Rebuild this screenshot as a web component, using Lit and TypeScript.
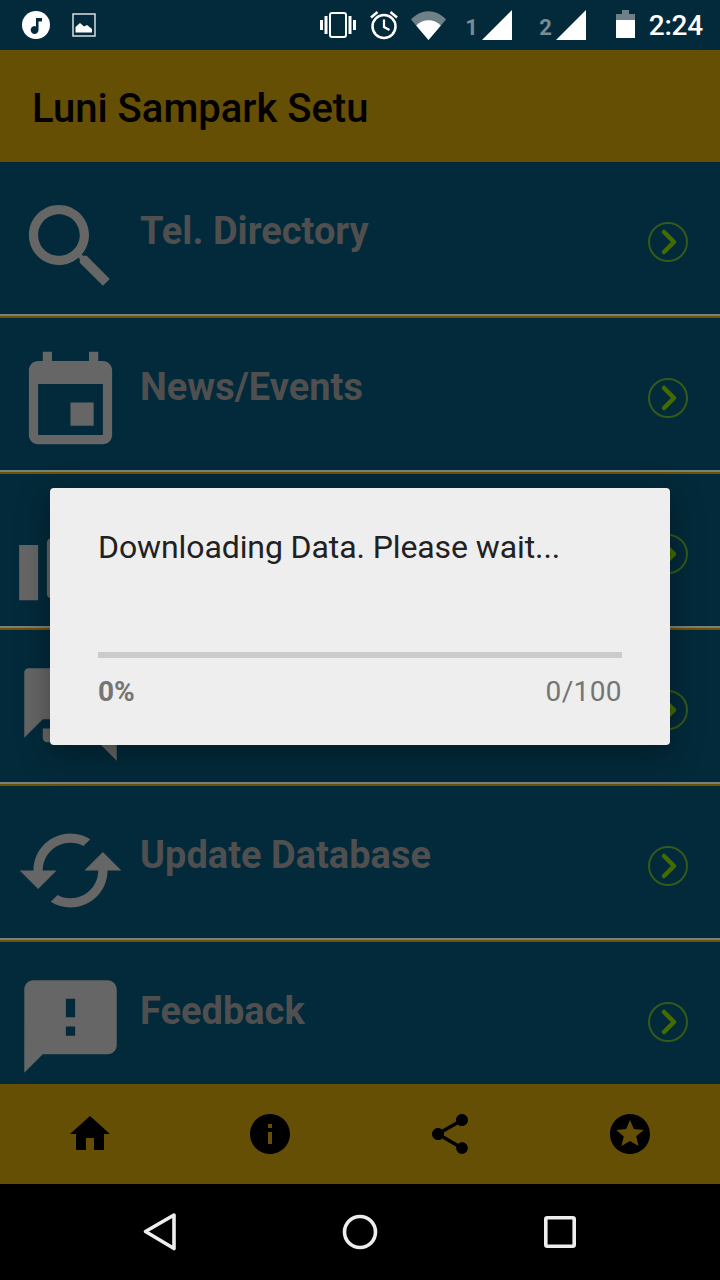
import { LitElement, html, css } from "lit";
import { customElement } from "lit/decorators.js";

const ICONS = {
  search: "M15.5 14h-.79l-.28-.27C15.41 12.59 16 11.11 16 9.5 16 5.91 13.09 3 9.5 3S3 5.91 3 9.5 5.91 16 9.5 16c1.61 0 3.09-.59 4.23-1.57l.27.28v.79l5 4.99L20.49 19l-4.99-5zm-6 0C7.01 14 5 11.99 5 9.5S7.01 5 9.5 5 14 7.01 14 9.5 11.99 14 9.5 14z",
  event: "M17 12h-5v5h5v-5zM16 1v2H8V1H6v2H5c-1.11 0-1.99.9-1.99 2L3 19c0 1.1.89 2 2 2h14c1.1 0 2-.9 2-2V5c0-1.1-.9-2-2-2h-1V1h-2zm3 18H5V8h14v11z",
  pages: "M.9 9.100H5V21H.9z M6.900 8.600c0-.6.4-1 1-1H22v13H7.900c-.6 0-1-.4-1-1z",
  forum: "M21 6h-2v9H6v2c0 .55.45 1 1 1h11l4 4V7c0-.55-.45-1-1-1zm-4 6V3c0-.55-.45-1-1-1H3c-.55 0-1 .45-1 1v14l4-4h10c.55 0 1-.45 1-1z",
  cached: "M19 8l-4 4h3c0 3.31-2.69 6-6 6-1.01 0-1.97-.25-2.8-.7l-1.46 1.46C8.97 19.54 10.43 20 12 20c4.42 0 8-3.58 8-8h3l-4-4zM6 12c0-3.31 2.69-6 6-6 1.01 0 1.97.25 2.8.7l1.46-1.46C15.03 4.46 13.57 4 12 4c-4.42 0-8 3.58-8 8H1l4 4 4-4H6z",
  sms: "M20 2H4c-1.1 0-1.99.9-1.99 2L2 22l4-4h14c1.1 0 2-.9 2-2V4c0-1.1-.9-2-2-2zm-7 12h-2v-2h2v2zm0-4h-2V6h2v4z",
  home: "M10 20v-6h4v6h5v-8h3L12 3 2 12h3v8z",
  info: "M12 2C6.48 2 2 6.48 2 12s4.48 10 10 10 10-4.48 10-10S17.52 2 12 2zm1 15h-2v-6h2v6zm0-8h-2V7h2v2z",
  share: "M18 16.08c-.76 0-1.44.3-1.96.77L8.91 12.7c.05-.23.09-.46.09-.7s-.04-.47-.09-.7l7.05-4.11c.54.5 1.25.81 2.04.81 1.66 0 3-1.34 3-3s-1.34-3-3-3-3 1.34-3 3c0 .24.04.47.09.7L8.04 9.81C7.5 9.31 6.79 9 6 9c-1.66 0-3 1.34-3 3s1.34 3 3 3c.79 0 1.5-.31 2.04-.81l7.12 4.16c-.05.21-.08.43-.08.65 0 1.61 1.31 2.92 2.92 2.92 1.61 0 2.92-1.31 2.92-2.92s-1.31-2.92-2.92-2.92z",
  stars: "M11.99 2C6.47 2 2 6.48 2 12s4.47 10 9.99 10C17.52 22 22 17.52 22 12S17.52 2 11.99 2zm4.24 16L12 15.45 7.77 18l1.12-4.81-3.73-3.23 4.92-.42L12 5l1.92 4.53 4.92.42-3.73 3.23L16.23 18z",
};

const ROWS: { icon: keyof typeof ICONS; label: string }[] = [
  { icon: "search", label: "Tel. Directory" },
  { icon: "event", label: "News/Events" },
  { icon: "pages", label: "" },
  { icon: "forum", label: "" },
  { icon: "cached", label: "Update Database" },
  { icon: "sms", label: "Feedback" },
];

@customElement("app-root")
export class AppRoot extends LitElement {
  static styles = css`
    :host {
      display: block;
      position: relative;
      width: 720px;
      height: 1280px;
      overflow: hidden;
      background: #032a3a;
      font-family: Roboto, "Liberation Sans", sans-serif;
    }
    .page { display: flex; flex-direction: column; height: 1280px; }
    .status {
      height: 50px;
      flex: none;
      display: flex;
      align-items: center;
      justify-content: space-between;
      color: #fff;
    }
    .status svg { display: block; flex: none; }
    .left { display: flex; align-items: center; margin-left: 22px; gap: 22px; }
    .right { display: flex; align-items: center; margin-right: 17px; }
    .sim { font-size: 22px; font-weight: 700; color: #7b8b92; width: 14px; text-align: center; margin-top: 5px; }
    .ml-alarm { margin-left: 14px; }
    .ml-wifi { margin-left: 13px; }
    .ml-sim1 { margin-left: 19px; }
    .ml-tri { margin-left: 3px; }
    .ml-sim2 { margin-left: 27px; }
    .ml-bat { margin-left: 30px; margin-bottom: 2px; }
    .time { margin-left: 14px; font-size: 28px; font-weight: 500; letter-spacing: -0.2px; }
    .appbar {
      height: 112px;
      flex: none;
      background: #654f05;
      display: flex;
      align-items: center;
      padding-left: 32px;
      padding-top: 4px;
      box-sizing: border-box;
      font-size: 40px;
      font-weight: 500;
      color: #020100;
    }
    .list { flex: 1; display: flex; flex-direction: column; min-height: 0; }
    .row {
      height: 156px;
      flex: none;
      box-sizing: border-box;
      display: flex;
      align-items: flex-start;
      padding: 29px 32px 0 15px;
      border-bottom: 2px solid #6d5200;
      position: relative;
    }
    .row:last-child { height: 142px; border-bottom: 0; }
    .rule { position: absolute; left: 0; right: 0; bottom: 0; height: 2px; background: #7b7f80; }
    .row:last-child .rule { display: none; }
    .icon { width: 111px; height: 111px; flex: none; fill: #666; display: block; }
    .label {
      margin-left: 14px;
      margin-top: 18px;
      font-size: 38px;
      line-height: 44px;
      font-weight: 700;
      color: #4f4f4f;
    }
    .chev { margin-left: auto; margin-top: 31px; flex: none; display: block; }
    .nav {
      height: 100px;
      flex: none;
      background: #654f05;
      display: grid;
      grid-template-columns: repeat(4, 1fr);
      align-items: center;
      justify-items: center;
    }
    .nav svg { width: 48px; height: 48px; fill: #000; display: block; }
    .sysbar {
      height: 96px;
      flex: none;
      background: #000;
      display: grid;
      grid-template-columns: 40px 40px 40px;
      justify-content: center;
      column-gap: 160px;
      align-items: center;
      justify-items: center;
    }
    .dialog {
      position: absolute;
      left: 50px;
      top: 488px;
      width: 620px;
      height: 257px;
      box-sizing: border-box;
      padding: 39px 48px 0;
      background: #eeeeee;
      border-radius: 4px;
      box-shadow: 0 8px 32px rgba(0, 0, 0, 0.35);
      display: flex;
      flex-direction: column;
    }
    .msg { font-size: 32px; line-height: 40px; color: #212121; white-space: nowrap; letter-spacing: -0.1px; }
    .bar { height: 6px; background: #cbcbcb; margin-top: 85px; }
    .meta {
      display: flex;
      justify-content: space-between;
      margin-top: 18px;
      font-size: 28px;
      line-height: 32px;
      color: #757575;
    }
    .pct { font-weight: 700; }
    .count { letter-spacing: 0.4px; }
  `;

  render() {
    return html`
      <div class="page">
        <div class="status">
          <div class="left">
            <svg width="28" height="28" viewBox="0 0 28 28">
              <circle cx="14" cy="14" r="14" fill="#fff"/>
              <path d="M14 7h6v3.5h-3.5v8.5a3.9 3.9 0 1 1-2.5-3.6z" fill="#032a3a"/>
            </svg>
            <svg width="24" height="24" viewBox="0 0 24 24">
              <rect x="1" y="1" width="22" height="22" fill="none" stroke="#fff" stroke-width="1.500" opacity=".85"/>
              <path d="M3.500 19.500V14l4.500-4 4 3.500 3-1.500 5 4v3.500z" fill="#fff"/>
            </svg>
          </div>
          <div class="right">
            <svg width="36" height="28" viewBox="0 0 36 28" fill="#fff">
              <rect x="10" y="2" width="16" height="24" rx="2" fill="none" stroke="#fff" stroke-width="2"/>
              <rect x="0" y="9" width="3" height="10"/><rect x="4.500" y="5" width="3" height="18"/>
              <rect x="33" y="9" width="3" height="10"/><rect x="28.500" y="5" width="3" height="18"/>
            </svg>
            <svg class="ml-alarm" width="28" height="30" viewBox="0 0 28 30" fill="none" stroke="#fff">
              <circle cx="14" cy="16.500" r="11.500" stroke-width="2.500"/>
              <path d="M14 9.500v7.500l5.500 3" stroke-width="2.200"/>
              <path d="M1 7.500 7.500 2M27 7.500 20.500 2" stroke-width="2.500"/>
            </svg>
            <svg class="ml-wifi" width="35" height="30" viewBox="0 0 35 30">
              <path d="M0 9.500C10-1.500 25-1.500 35 9.500L17.500 30z" fill="#6e8088"/>
              <path d="M5.200 15.500C12 8.500 23 8.500 29.800 15.500L17.500 30z" fill="#fff"/>
            </svg>
            <span class="sim ml-sim1">1</span>
            <svg class="ml-tri" width="30" height="30" viewBox="0 0 30 30"><path d="M0 30 30 0v30z" fill="#fff"/></svg>
            <span class="sim ml-sim2">2</span>
            <svg class="ml-tri" width="30" height="30" viewBox="0 0 30 30"><path d="M0 30 30 0v30z" fill="#fff"/></svg>
            <svg class="ml-bat" width="19" height="28" viewBox="0 0 19 28">
              <path d="M0 4h6V0h7v4h6v7H0z" fill="#6e8088"/>
              <rect x="0" y="10" width="19" height="18" fill="#fff"/>
            </svg>
            <span class="time">2:24</span>
          </div>
        </div>
        <div class="appbar">Luni Sampark Setu</div>
        <div class="list">
          ${ROWS.map(
            (r) => html`
              <div class="row">
                <svg class="icon" viewBox="0 0 24 24"><path d=${ICONS[r.icon]}/></svg>
                ${r.label ? html`<div class="label">${r.label}</div>` : ""}
                <svg class="chev" width="40" height="40" viewBox="0 0 40 40" fill="none">
                  <circle cx="20" cy="20" r="19" stroke="#34591a" stroke-width="2"/>
                  <path d="M16 10l10 10-10 10" stroke="#436c00" stroke-width="4.500" stroke-linecap="round" stroke-linejoin="round"/>
                </svg>
                <div class="rule"></div>
              </div>
            `
          )}
        </div>
        <div class="nav">
          ${(["home", "info", "share", "stars"] as const).map(
            (k) => html`<svg viewBox="0 0 24 24"><path fill-rule="evenodd" d=${ICONS[k]}/></svg>`
          )}
        </div>
        <div class="sysbar">
          <svg width="40" height="40" viewBox="0 0 40 40" fill="none" stroke="#eee" stroke-width="3.600" stroke-linejoin="round">
            <path d="M34 3 L5.500 19.500 L34 36.500 Z"/>
          </svg>
          <svg width="40" height="40" viewBox="0 0 40 40" fill="none"><circle cx="20" cy="20" r="15.500" stroke="#eee" stroke-width="3.600"/></svg>
          <svg width="40" height="40" viewBox="0 0 40 40" fill="none"><rect x="5.800" y="5.800" width="28.400" height="28.400" rx="1.500" stroke="#eee" stroke-width="3.600"/></svg>
        </div>
      </div>
      <div class="dialog">
        <div class="msg">Downloading Data. Please wait...</div>
        <div class="bar"></div>
        <div class="meta"><span class="pct">0%</span><span class="count">0/100</span></div>
      </div>
    `;
  }
}
